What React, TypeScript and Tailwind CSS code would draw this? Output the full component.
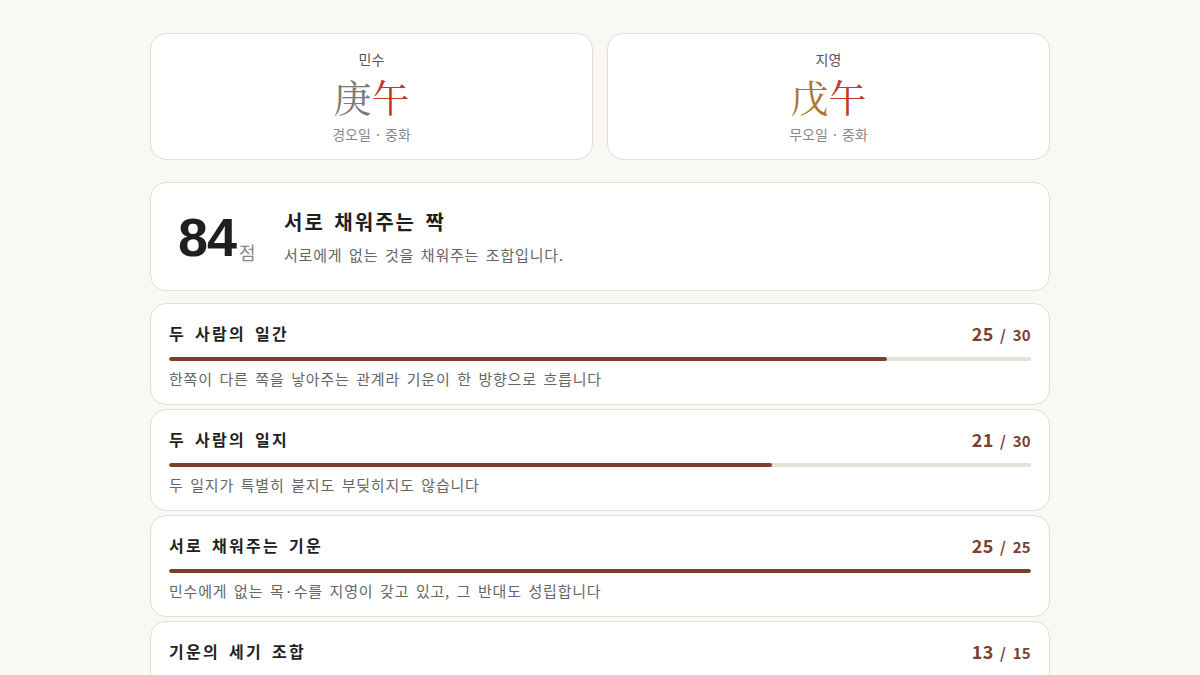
import React from "react";

const KR = '"Noto Sans CJK KR", "Noto Sans", sans-serif';

type Person = { name: string; stem: string; stemColor: string; branch: string; sub: string };

const people: Person[] = [
  { name: "민수", stem: "庚", stemColor: "text-[#7a7a7a]", branch: "午", sub: "경오일 · 중화" },
  { name: "지영", stem: "戊", stemColor: "text-[#b07430]", branch: "午", sub: "무오일 · 중화" },
];

const items = [
  { title: "두 사람의 일간", score: 25, max: 30, desc: "한쪽이 다른 쪽을 낳아주는 관계라 기운이 한 방향으로 흐릅니다" },
  { title: "두 사람의 일지", score: 21, max: 30, desc: "두 일지가 특별히 붙지도 부딪히지도 않습니다" },
  { title: "서로 채워주는 기운", score: 25, max: 25, desc: "민수에게 없는 목·수를 지영이 갖고 있고, 그 반대도 성립합니다" },
  { title: "기운의 세기 조합", score: 13, max: 15, desc: "두 사람의 기운 세기가 서로를 잘 받쳐줍니다" },
];

function PersonCard({ p }: { p: Person }) {
  return (
    <div className="flex h-[127px] flex-col items-center rounded-2xl border border-[#e4ded4] bg-white pt-[14px]">
      <div className="text-[14px] leading-[22px] text-[#555]">{p.name}</div>
      <div className="mt-[2px] text-[38px] leading-[48px]" style={{ fontFamily: '"Noto Serif CJK SC", "Noto Sans CJK SC", serif' }}>
        <span className={p.stemColor}>{p.stem}</span>
        <span className="text-[#c0392b]">{p.branch}</span>
      </div>
      <div className="mt-[3px] text-[14px] leading-[22px] text-[#888]">{p.sub}</div>
    </div>
  );
}

export default function App() {
  return (
    <div className="min-h-[675px] bg-[#faf8f4]" style={{ fontFamily: KR }}>
      <div className="mx-auto w-[900px] pt-[33px]">
        <div className="grid grid-cols-2 gap-[14px]">
          {people.map((p) => (
            <PersonCard key={p.name} p={p} />
          ))}
        </div>

        <div className="mt-[22px] flex h-[109px] items-center rounded-2xl border border-[#e4ded4] bg-white pl-[27px]">
          <div className="flex w-[106px] items-end">
            <span className="text-[54px] font-bold leading-[54px] tracking-[-1px] text-[#1f1f1f]" style={{ fontFamily: '"Liberation Sans", Arial, sans-serif' }}>
              84
            </span>
            <span className="mb-[1px] ml-[3px] text-[18px] leading-[22px] text-[#888]">점</span>
          </div>
          <div className="flex flex-col">
            <div className="text-[20px] font-bold leading-[28px] tracking-[2px] text-[#1f1f1f] [word-spacing:3px]">서로 채워주는 짝</div>
            <div className="mt-[8px] text-[15px] leading-[22px] tracking-[0.8px] text-[#666] [word-spacing:2.5px]">
              서로에게 없는 것을 채워주는 조합입니다.
            </div>
          </div>
        </div>

        <div className="mt-[12px] flex flex-col gap-[4px]">
          {items.map((it) => (
            <div key={it.title} className="rounded-2xl border border-[#e4ded4] bg-white px-[18px] pb-[15px] pt-[18px]">
              <div className="flex h-[22px] items-center justify-between">
                <div className="text-[16px] font-bold leading-[22px] tracking-[2.3px] text-[#1f1f1f] [word-spacing:3px]">{it.title}</div>
                <div className="flex h-[22px] items-baseline text-[#7b3f2c]">
                  <span className="text-[18px] font-bold leading-[22px] tracking-[0.5px]">{it.score}</span>
                  <span className="ml-[6px] text-[15px] font-semibold leading-[22px] tracking-[0.3px] [word-spacing:3px]">/ {it.max}</span>
                </div>
              </div>
              <div className="mt-[13px] h-[4px] w-full overflow-hidden rounded-full bg-[#e5e0d8]">
                <div className="h-full rounded-full bg-[#7b3f2c]" style={{ width: `${(it.score / it.max) * 100}%` }} />
              </div>
              <div className="mt-[8px] text-[15px] leading-[20px] tracking-[0.8px] text-[#666] [word-spacing:2.5px]">{it.desc}</div>
            </div>
          ))}
        </div>
      </div>
    </div>
  );
}
